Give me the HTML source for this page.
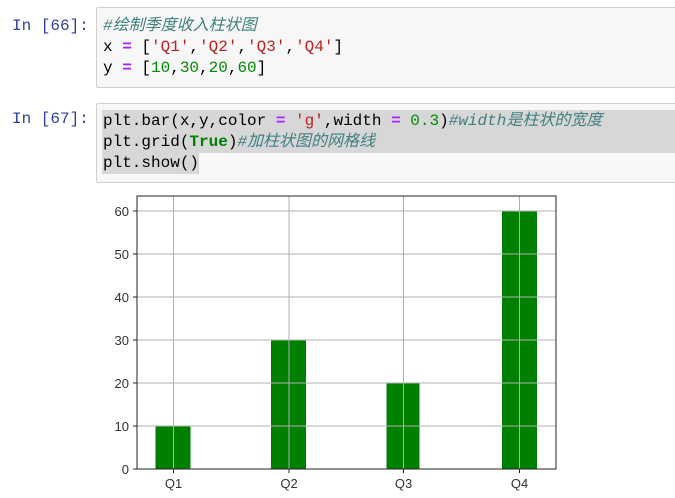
<!DOCTYPE html>
<html><head><meta charset="utf-8"><style>
body{margin:0;width:675px;height:498px;background:#fff;position:relative;overflow:hidden;font-family:"Liberation Mono","Noto Sans CJK SC",monospace;}
.p{position:absolute;left:12px;color:#303f9f;font-size:16px;line-height:21px;}
.cell{position:absolute;left:96px;width:590px;background:#f7f7f7;border:1px solid #cfcfcf;border-radius:2px;}
.ln{position:absolute;left:6px;font-size:16px;line-height:21px;white-space:pre;color:#000;}
.c{color:#408080;font-style:italic}
.s{color:#ba2121}
.n{color:#080}
.o{color:#aa22ff;font-weight:bold}
.k{color:#008000;font-weight:bold}
.hl{background:#d7d7d7}
</style></head><body>
<div class="p" style="top:16px">In [66]:</div>
<div class="cell" style="top:7px;height:79px">
<div class="ln" style="top:8px"><span class="c">#绘制季度收入柱状图</span></div>
<div class="ln" style="top:29px">x <span class="o">=</span> [<span class="s">'Q1'</span>,<span class="s">'Q2'</span>,<span class="s">'Q3'</span>,<span class="s">'Q4'</span>]</div>
<div class="ln" style="top:50px">y <span class="o">=</span> [<span class="n">10</span>,<span class="n">30</span>,<span class="n">20</span>,<span class="n">60</span>]</div>
</div>
<div class="p" style="top:109px">In [67]:</div>
<div class="cell" style="top:103px;height:78px">
<div class="hl" style="position:absolute;left:5px;top:6px;width:590px;height:43px"></div>
<div class="hl" style="position:absolute;left:5px;top:49px;width:97px;height:21px"></div>
<div class="ln" style="top:7px">plt.bar(x,y,color <span class="o">=</span> <span class="s">'g'</span>,width <span class="o">=</span> <span class="n">0.3</span>)<span class="c">#width是柱状的宽度</span></div>
<div class="ln" style="top:28px">plt.grid(<span class="k">True</span>)<span class="c">#加柱状图的网格线</span></div>
<div class="ln" style="top:49px">plt.show()</div>
</div>
<svg style="position:absolute;left:0;top:0" width="675" height="498">
<g fill="#008000">
<rect x="155.5" y="426" width="35" height="43"/>
<rect x="271" y="340" width="35" height="129"/>
<rect x="386.5" y="383" width="33" height="86"/>
<rect x="502" y="211" width="35" height="258"/>
</g>
<g stroke="#b0b0b0" stroke-width="1" fill="none">
<line x1="173.5" y1="196" x2="173.5" y2="469"/>
<line x1="289" y1="196" x2="289" y2="469"/>
<line x1="403.5" y1="196" x2="403.5" y2="469"/>
<line x1="519.5" y1="196" x2="519.5" y2="469"/>
<line x1="137" y1="211" x2="556" y2="211"/>
<line x1="137" y1="254" x2="556" y2="254"/>
<line x1="137" y1="297" x2="556" y2="297"/>
<line x1="137" y1="340" x2="556" y2="340"/>
<line x1="137" y1="383" x2="556" y2="383"/>
<line x1="137" y1="426" x2="556" y2="426"/>
</g>
<rect x="137" y="196" width="419" height="273" fill="none" stroke="#222" stroke-width="1"/>
<g stroke="#222"><line x1="133" y1="211" x2="137" y2="211"/><line x1="133" y1="254" x2="137" y2="254"/><line x1="133" y1="297" x2="137" y2="297"/><line x1="133" y1="340" x2="137" y2="340"/><line x1="133" y1="383" x2="137" y2="383"/><line x1="133" y1="426" x2="137" y2="426"/><line x1="133" y1="469" x2="137" y2="469"/>
<line x1="173.5" y1="469" x2="173.5" y2="473"/><line x1="289" y1="469" x2="289" y2="473"/><line x1="403.5" y1="469" x2="403.5" y2="473"/><line x1="519.5" y1="469" x2="519.5" y2="473"/></g>
<g font-family="Liberation Sans, sans-serif" font-size="13" fill="#333" text-anchor="end">
<text x="129" y="216">60</text><text x="129" y="259">50</text><text x="129" y="302">40</text><text x="129" y="345">30</text><text x="129" y="388">20</text><text x="129" y="431">10</text><text x="129" y="474">0</text>
</g>
<g font-family="Liberation Sans, sans-serif" font-size="13" fill="#333" text-anchor="middle">
<text x="173.5" y="488">Q1</text><text x="289" y="488">Q2</text><text x="403.5" y="488">Q3</text><text x="519.5" y="488">Q4</text>
</g>
</svg>
</body></html>
